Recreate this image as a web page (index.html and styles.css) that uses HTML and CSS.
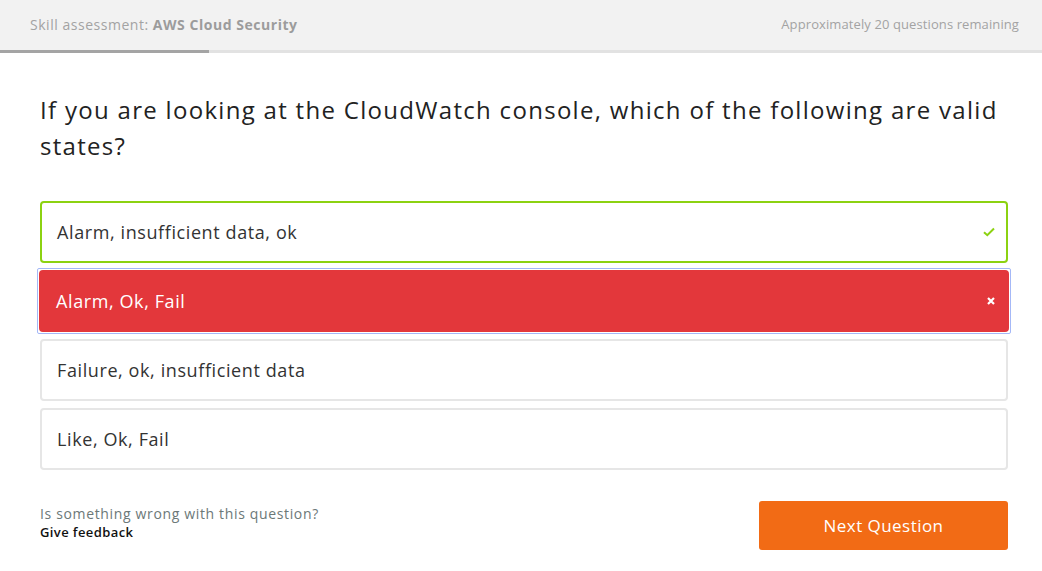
FILE: index.html
```html
<!DOCTYPE html>
<html>
<head>
<meta charset="utf-8">
<link rel="stylesheet" href="styles.css">
</head>
<body>
<header class="top">
  <div class="top-row">
    <span class="title">Skill assessment: <b>AWS Cloud Security</b></span>
    <span class="remaining">Approximately 20 questions remaining</span>
  </div>
  <div class="progress"><div class="progress-fill" style="width:209px"></div></div>
</header>
<main class="content">
  <h1 class="question">If you are looking at the CloudWatch console, which of the following are valid states?</h1>
  <div class="options">
    <div class="option correct">
      <span>Alarm, insufficient data, ok</span>
      <svg class="icon" width="12" height="10" viewBox="0 0 12 10"><path d="M1 5.2 L4.3 8.2 L11 1.5" fill="none" stroke="#8cd211" stroke-width="2"/></svg>
    </div>
    <div class="focus-ring">
      <div class="option wrong">
        <span>Alarm, Ok, Fail</span>
        <svg class="icon" width="10" height="10" viewBox="0 0 10 10"><path d="M2 2 L8 8 M8 2 L2 8" fill="none" stroke="#fff" stroke-width="2.2"/></svg>
      </div>
    </div>
    <div class="option">
      <span>Failure, ok, insufficient data</span>
    </div>
    <div class="option">
      <span>Like, Ok, Fail</span>
    </div>
  </div>
  <div class="footer">
    <div class="feedback">
      <div class="feedback-q">Is something wrong with this question?</div>
      <div class="feedback-link">Give feedback</div>
    </div>
    <button class="next">Next Question</button>
  </div>
</main>
</body>
</html>
```

FILE: styles.css
```css
* { box-sizing: border-box; }
html, body { margin: 0; padding: 0; background: #fff; }
body { font-family: "Open Sans", "Lato", sans-serif; color: #222; }

.top { background: #f2f2f2; }
.top-row {
  height: 50px;
  display: flex;
  align-items: center;
  justify-content: space-between;
  padding: 0 23px 2px 30px;
  font-size: 14px;
  color: #a3a3a3;
}
.title { letter-spacing: 0.53px; }
.top-row b { font-weight: 700; color: #9c9c9c; }
.remaining { font-size: 13px; letter-spacing: 0.1px; }
.progress { height: 3px; background: #e2e2e2; }
.progress-fill { height: 100%; background: #a4a4a4; }

.content { padding: 0 34px 0 40px; }
.question {
  margin: 39px 0 0;
  font-size: 24px;
  font-weight: 400;
  line-height: 36px;
  color: #222;
  letter-spacing: 1.3px;
}
.options {
  margin-top: 37px;
  display: flex;
  flex-direction: column;
  gap: 7px;
}
.option {
  height: 62px;
  border: 2px solid #e6e6e6;
  border-radius: 4px;
  display: flex;
  align-items: center;
  justify-content: space-between;
  padding: 0 11px 0 15px;
  font-size: 18px;
  color: #333;
  background: #fff;
  letter-spacing: 0.6px;
}
.option.correct { border-color: #8cd211; }
.option.wrong { background: #e3373b; border-color: #e3373b; color: #fff; }
.focus-ring {
  margin: -2px -3px -2px -3px;
  padding: 1px;
  border: 1px solid #a4b8f7;
  border-radius: 2px;
}
.icon { display: block; }

.footer {
  margin-top: 31px;
  display: flex;
  justify-content: space-between;
  align-items: flex-start;
}
.feedback { padding-top: 4px; }
.feedback-q { font-size: 14px; color: #6c7878; line-height: 18px; letter-spacing: 0.65px; }
.feedback-link { font-size: 13px; color: #111; font-weight: 600; line-height: 18px; letter-spacing: 0.4px; }
.next {
  width: 249px;
  height: 49px;
  background: #f26b15;
  color: #fff;
  border: none;
  border-radius: 3px;
  font-family: inherit;
  font-size: 17px;
  letter-spacing: 0.45px;
}
```
